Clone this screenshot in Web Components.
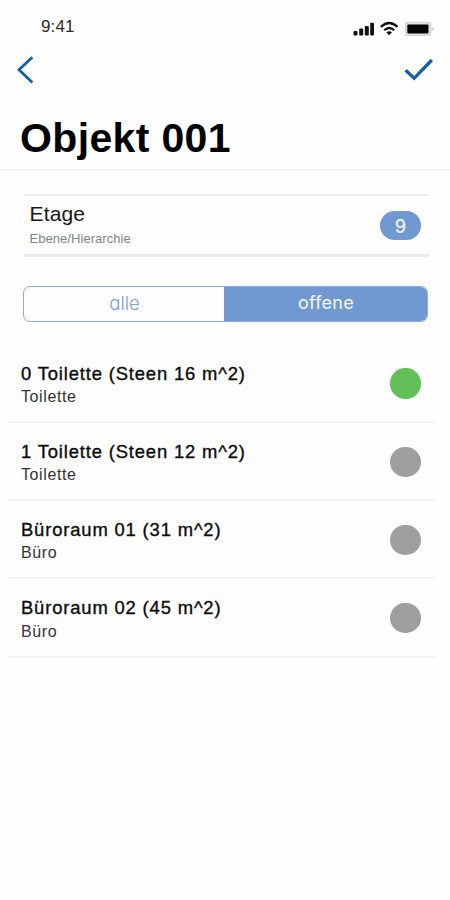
<!DOCTYPE html>
<html lang="de">
<head>
<meta charset="utf-8">
<title>Objekt 001</title>
<style>
body { margin: 0; background: #fefefe; font-family: "Liberation Sans", Arial, sans-serif; color: #080808; }
</style>
</head>
<body>
<object-screen></object-screen>
<script>
function define(name, html) {
  const template = document.createElement('template');
  template.innerHTML = html;
  customElements.define(name, class extends HTMLElement {
    constructor() {
      super();
      this.attachShadow({ mode: 'open' }).append(template.content.cloneNode(true));
    }
  });
}

define('status-bar', `
<style>
:host { display: flex; justify-content: space-between; height: 50px; box-sizing: border-box; padding: 17px 15px 0 41px; }
time { font-size: 17px; line-height: 20px; letter-spacing: .1px; color: #2b2b2b; }
svg { display: block; margin-top: 2px; }
</style>
<time>9:41</time>
<svg width="82" height="20" viewBox="353 19 82 20">
  <g fill="#111"><rect x="353.5" y="31" width="4" height="4.6" rx="1"/><rect x="359.2" y="28.5" width="4" height="7.1" rx="1"/><rect x="364.8" y="26" width="4" height="9.6" rx="1"/><rect x="370.2" y="22.8" width="3.8" height="12.8" rx="1"/></g>
  <g fill="none" stroke="#111" stroke-width="2.2"><path d="M380.8 26.9Q389.2 19.1 397.6 26.9"/><path d="M384.2 30.3Q389.2 25.7 394.2 30.3"/></g>
  <path d="M386.4 32.3Q389.2 30.2 392 32.3L389.2 35.2Z" fill="#111"/>
  <rect x="405.4" y="22.4" width="25.4" height="13" rx="2.5" fill="#e2e2e2" stroke="#d4d4d4" stroke-width="1.2"/>
  <rect x="407.3" y="24.5" width="21.2" height="9" rx="1" fill="#050505"/>
  <path d="M432.2 27v4q2-.8 2-2t-2-2z" fill="#ccc"/>
</svg>`);

define('nav-bar', `
<style>
:host { display: flex; justify-content: space-between; height: 60px; box-sizing: border-box; padding: 5px 16px 0 16px; }
svg { display: block; fill: none; stroke: #155ead; stroke-width: 2.8; }
</style>
<svg width="20" height="32" viewBox="16 55 20 32"><path d="M32.3 57.2L19 69.8L32.3 82.5"/></svg>
<svg width="32" height="32" viewBox="402 55 32 32"><path d="M405.6 70.2L414.2 78.3L431.8 60" style="stroke-width:3.3"/></svg>`);

define('page-title', `
<style>
:host { display: block; height: 61px; box-sizing: border-box; padding-top: 4px; padding-left: 20px; border-bottom: 2px solid #f3f3f3; }
h1 { margin: 0; font-size: 41px; line-height: 48px; letter-spacing: .35px; color: #000; }
</style>
<h1><slot></slot></h1>`);

define('count-badge', `
<style>
:host { display: flex; align-items: center; justify-content: center; width: 41px; height: 29px; border-radius: 15px; background: #7099d1; color: #eef3fb; font: 500 18px Inter, sans-serif; }
span { position: relative; top: 1px; }
</style>
<span><slot></slot></span>`);

define('level-card', `
<style>
:host { display: flex; justify-content: space-between; align-items: center; margin: 23px 21px 0 24px; height: 63px; box-sizing: border-box; padding: 0 8px 0 5.5px; border-top: 2px solid #ebebeb; border-bottom: 3px solid #e9eaea; }
.name { font-size: 21px; line-height: 24px; letter-spacing: .15px; color: #171717; margin-top: -2px; }
.kind { font-size: 13px; line-height: 15px; letter-spacing: .05px; color: #7f8489; margin-top: 5px; }
</style>
<div><div class="name"><slot name="name"></slot></div><div class="kind"><slot name="kind"></slot></div></div>
<slot name="badge"></slot>`);

define('filter-switch', `
<style>
:host { display: grid; grid-template-columns: 200px 1fr; margin: 29px 22px 0 23px; height: 36px; box-sizing: border-box; border: 1.3px solid #8dade0; border-radius: 7px; overflow: hidden; font: 300 18.5px/32px Inter, sans-serif; font-feature-settings: "cv11"; text-align: center; }
.off { color: #7b9edb; padding-left: 1px; }
.on { background: #7099d1; color: #f3f6fc; font-weight: 400; font-size: 18px; letter-spacing: .25px; padding-left: 1px; }
</style>
<div class="off"><slot name="off"></slot></div><div class="on"><slot name="on"></slot></div>`);

define('room-row', `
<style>
:host { display: flex; justify-content: space-between; height: 78.2px; box-sizing: border-box; margin: 0 15px 0 8px; padding: 17.8px 14.2px 0 13px; border-bottom: 2px solid #f3f3f3; }
.title { font-size: 18.4px; line-height: 21px; letter-spacing: .85px; -webkit-text-stroke: .35px #0b0b0b; color: #0b0b0b; white-space: nowrap; }
.kind { font-size: 16px; line-height: 18px; letter-spacing: .6px; margin-top: 4.5px; color: #333; }
.dot { width: 30.5px; height: 30.5px; border-radius: 50%; background: var(--dot, #9f9f9f); margin-top: 5.8px; }
</style>
<div><div class="title"><slot></slot></div><div class="kind"><slot name="kind"></slot></div></div>
<div class="dot"></div>`);

define('object-screen', `
<style>
:host { display: block; height: 900px; overflow: hidden; }
main { padding-top: 22.8px; }
.done { --dot: #62c058; }
</style>
<status-bar></status-bar>
<nav-bar></nav-bar>
<page-title>Objekt 001</page-title>
<level-card><span slot="name">Etage</span><span slot="kind">Ebene/Hierarchie</span><count-badge slot="badge">9</count-badge></level-card>
<filter-switch><span slot="off">alle</span><span slot="on">offene</span></filter-switch>
<main>
<room-row class="done">0 Toilette (Steen 16 m^2)<span slot="kind">Toilette</span></room-row>
<room-row>1 Toilette (Steen 12 m^2)<span slot="kind">Toilette</span></room-row>
<room-row>Büroraum 01 (31 m^2)<span slot="kind">Büro</span></room-row>
<room-row>Büroraum 02 (45 m^2)<span slot="kind">Büro</span></room-row>
</main>`);
</script>
</body>
</html>
